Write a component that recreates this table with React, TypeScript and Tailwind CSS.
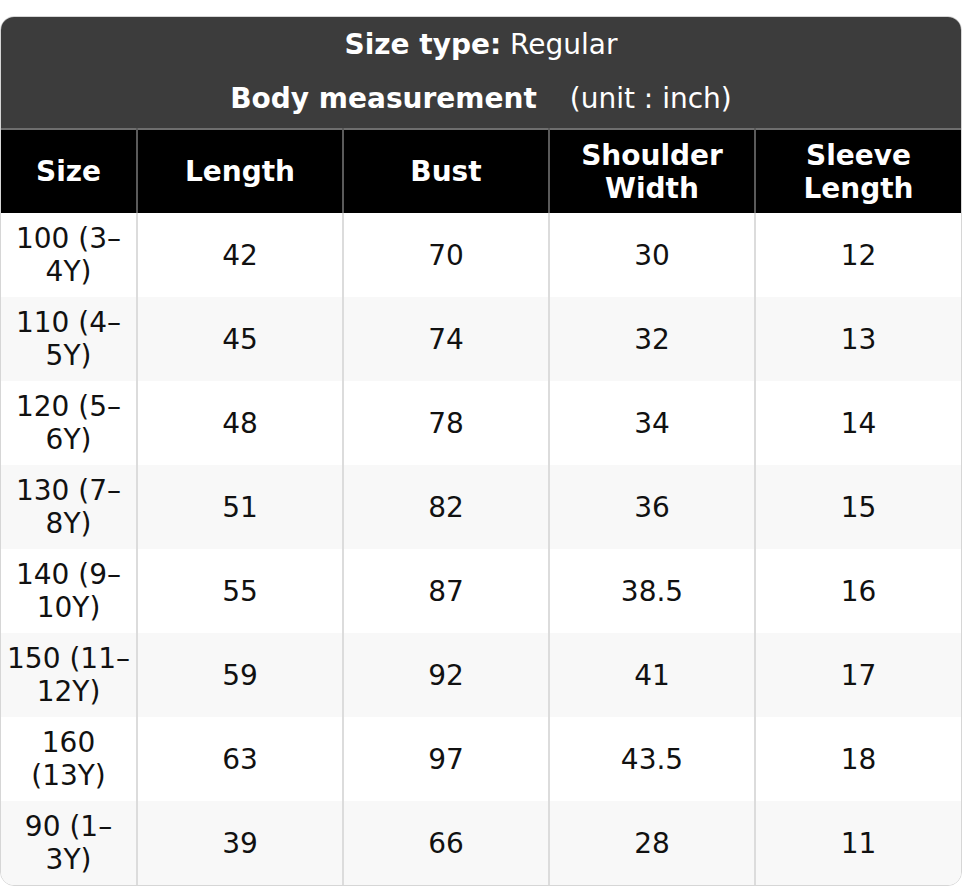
const rows = [
  ["100 (3–4Y)", "42", "70", "30", "12"],
  ["110 (4–5Y)", "45", "74", "32", "13"],
  ["120 (5–6Y)", "48", "78", "34", "14"],
  ["130 (7–8Y)", "51", "82", "36", "15"],
  ["140 (9–10Y)", "55", "87", "38.5", "16"],
  ["150 (11–12Y)", "59", "92", "41", "17"],
  ["160 (13Y)", "63", "97", "43.5", "18"],
  ["90 (1–3Y)", "39", "66", "28", "11"],
];

const heads = ["Size", "Length", "Bust", "Shoulder Width", "Sleeve Length"];

export default function App() {
  return (
    <div className="bg-white w-[962px] pt-4" style={{ fontFamily: "'DejaVu Sans', sans-serif" }}>
      <div className="rounded-[14px] border border-[#d6d6d6] overflow-hidden">
        <table className="w-full table-fixed border-collapse text-[28px] leading-[33px] text-[#111]">
          <colgroup>
            <col className="w-[136px]" />
            <col className="w-[206px]" />
            <col className="w-[206px]" />
            <col className="w-[206px]" />
            <col />
          </colgroup>
          <thead>
            <tr className="bg-[#3c3c3c] text-white">
              <th colSpan={5} className="h-[56px] pb-[2px] font-normal text-center">
                <span className="font-bold">Size type:</span> Regular
              </th>
            </tr>
            <tr className="bg-[#3c3c3c] text-white border-b-2 border-[#6e6e6e]">
              <th colSpan={5} className="h-[56px] pb-1 font-normal text-center">
                <span className="font-bold">Body measurement</span>
                <span className="ml-[33px]">(unit : inch)</span>
              </th>
            </tr>
            <tr className="bg-black text-white">
              {heads.map((h, i) => (
                <th
                  key={h}
                  className={`h-[84px] px-1 font-bold text-center ${i > 0 ? "border-l-2 border-[#5a5a5a]" : ""}`}
                >
                  {h}
                </th>
              ))}
            </tr>
          </thead>
          <tbody>
            {rows.map((r, ri) => (
              <tr key={r[0]} className={ri % 2 === 1 ? "bg-[#f8f8f8]" : "bg-white"}>
                {r.map((c, i) => (
                  <td
                    key={i}
                    className={`h-[84px] px-1 text-center ${i > 0 ? "border-l-2 border-[#dcdcdc]" : ""}`}
                  >
                    {c}
                  </td>
                ))}
              </tr>
            ))}
          </tbody>
        </table>
      </div>
    </div>
  );
}
